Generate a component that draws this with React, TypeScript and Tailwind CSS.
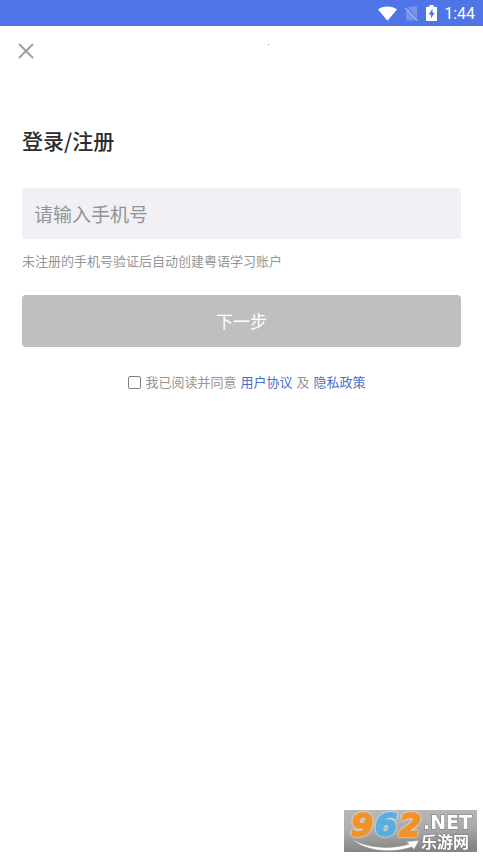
import { useState } from 'react';

const StatusBar = () => (
  <div className="flex h-[26px] items-center justify-end bg-[#4e74e6] pr-[8px] text-white">
    <svg className="mr-[8px] h-[15px] w-[19px]" viewBox="0 0 19 15" fill="currentColor">
      <path d="M0 3.600C2.600 1.500 5.900.4 9.500.4s6.900 1.100 9.500 3.200L9.500 14.800z" />
    </svg>
    <svg className="mr-[8px] h-[15px] w-[13px]" viewBox="0 0 13 15">
      <path d="M4.500.5H12v14H1V4z" fill="#7693ed" />
      <path d="M1.500 1.200l11 12" stroke="#4e74e6" strokeWidth="1.200" />
      <path d="M.3 1.800l12.200 12.800" stroke="#a5b9f5" strokeWidth="1.200" />
    </svg>
    <svg className="mr-[7px] h-[16px] w-[11px]" viewBox="0 0 11 16">
      <path d="M3.500 0h4v1.700H10c.6 0 1 .4 1 1V15c0 .6-.4 1-1 1H1c-.6 0-1-.4-1-1V2.700c0-.6.4-1 1-1h2.500z" fill="currentColor" />
      <path d="M6.500 3.800L2.600 9.600h2.300v4l3.700-5.800H6.500z" fill="#4e74e6" />
    </svg>
    <span className="pt-[1px] font-['Roboto',sans-serif] text-[16px] leading-[20px]">1:44</span>
  </div>
);

const Watermark = () => (
  <div className="fixed right-[6px] bottom-[6px]">
    <svg className="block h-[42px] w-[133px] overflow-visible" viewBox="0 0 133 42">
      <defs>
        <linearGradient id="plate" x1="0" y1="0" x2=".15" y2="1">
          <stop offset="0" stopColor="#b9b9b9" />
          <stop offset=".5" stopColor="#ababab" />
          <stop offset="1" stopColor="#858585" />
        </linearGradient>
      </defs>
      <rect width="133" height="42" fill="url(#plate)" />
      {/* 弧形箭头 */}
      <path
        d="M7 28c13 10 40 12 58 6l-3-2.500 13-1-5 9-2-2.500C47 44 19 41 7 28z"
        fill="#fff"
        stroke="#888"
        strokeWidth=".5"
      />
      <g
        className="font-['DejaVu_Sans',sans-serif] text-[32px] font-bold italic drop-shadow-[0_0_1px_#ffffff]"
        strokeWidth="2"
      >
        <text x="7" y="26" fill="#f0932b" stroke="#f0932b">9</text>
        <text x="31" y="26" fill="#5aaee0" stroke="#5aaee0">6</text>
        <text x="55" y="26" fill="#f0932b" stroke="#f0932b">2</text>
      </g>
      <g fill="#fff" stroke="#777" strokeWidth="1" paintOrder="stroke">
        <text x="79" y="19" className="font-['DejaVu_Sans',sans-serif] text-[19px] font-bold">.NET</text>
        <text x="77" y="38" className="font-['Liberation_Sans','Noto_Sans_CJK_SC',sans-serif] text-[16px] font-bold">乐游网</text>
      </g>
    </svg>
  </div>
);

export default function App() {
  const [phone, setPhone] = useState('');
  const [agreed, setAgreed] = useState(false);

  return (
    <div className="bg-white font-['Noto_Sans_CJK_SC',sans-serif]">
      <StatusBar />
      <header className="flex h-[50px] items-center pl-[18px]">
        <button type="button" aria-label="关闭" className="text-[#a0a0a0]">
          <svg className="block h-[16px] w-[16px]" viewBox="0 0 16 16" fill="none" stroke="currentColor" strokeWidth="2">
            <path d="M1 1l14 14M15 1L1 15" />
          </svg>
        </button>
        <div className="flex flex-1 justify-center self-start pt-[18px] pl-[19px]">
          <span className="h-px w-px bg-[#8c8c8c]" />
        </div>
      </header>

      <main className="px-[22px] pt-[48px]">
        <h1 className="text-[21px] leading-[32px] font-medium text-[#2d2d2f]">登录/注册</h1>
        <input
          type="tel"
          aria-label="手机号"
          placeholder="请输入手机号"
          value={phone}
          onChange={(e) => setPhone(e.target.value)}
          className="mt-[32px] block h-[51px] w-full rounded-[3px] bg-[#f1f0f5] px-[12px] text-[19px] text-[#2d2d2f] outline-none placeholder:text-[#939395]"
        />
        <p className="mt-[12px] text-[13px] leading-[20px] text-[#969696]">
          未注册的手机号验证后自动创建粤语学习账户
        </p>
        <button type="button" className="mt-[24px] block h-[52px] w-full rounded-[4px] bg-[#bfbfbf] text-[17px] text-white">
          下一步
        </button>
        <div className="mt-[25px] flex items-center justify-center gap-[4px] pl-[11px] text-[13px] leading-[20px] text-[#969696]">
          <label className="flex items-center gap-[4px]">
            <input
              type="checkbox"
              checked={agreed}
              onChange={(e) => setAgreed(e.target.checked)}
              className="h-[13px] w-[13px] appearance-none rounded-[2px] border border-[#808080] bg-white checked:bg-[#4e74e6]"
            />
            我已阅读并同意
          </label>
          <a href="#terms" className="text-[#4a6fcb]">用户协议</a>
          <span>及</span>
          <a href="#privacy" className="text-[#4a6fcb]">隐私政策</a>
        </div>
      </main>

      <Watermark />
    </div>
  );
}
